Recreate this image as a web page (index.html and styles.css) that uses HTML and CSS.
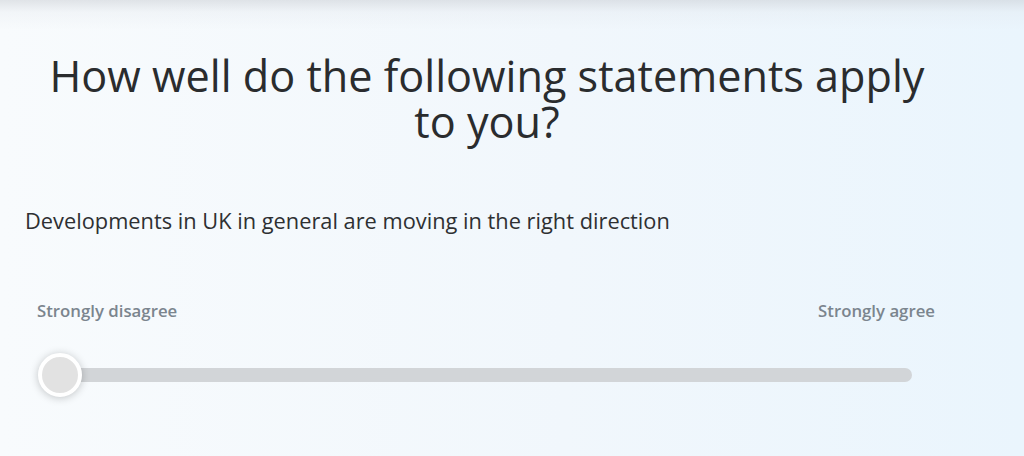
FILE: index.html
```html
<!DOCTYPE html>
<html lang="en">
<head>
<meta charset="utf-8">
<title>Survey</title>
<link rel="stylesheet" href="styles.css">
</head>
<body>
<main class="page">
  <h1 class="title">How well do the following statements apply to you?</h1>
  <p class="statement">Developments in UK in general are moving in the right direction</p>
  <div class="scale">
    <div class="labels">
      <span class="label">Strongly disagree</span>
      <span class="label">Strongly agree</span>
    </div>
    <div class="slider">
      <div class="track"></div>
      <div class="thumb"></div>
    </div>
  </div>
</main>
</body>
</html>
```

FILE: styles.css
```css
* { box-sizing: border-box; }
html, body {
  margin: 0;
  height: 100%;
}
body {
  font-family: "Open Sans", "Liberation Sans", sans-serif;
  color: #2b2d2f;
  background: linear-gradient(90deg, #f8fbfd 0%, #f1f7fc 55%, #eaf5fd 100%);
  overflow: hidden;
  position: relative;
}
body::before {
  content: "";
  position: absolute;
  left: 0; right: 0; top: 0;
  height: 30px;
  background: linear-gradient(180deg, rgba(200,204,210,0.5) 0%, rgba(220,224,230,0.22) 40%, rgba(240,244,248,0) 100%);
  pointer-events: none;
}
.page {
  width: 960px;
  padding: 0 0 0 25px;
}
.title {
  margin: 0;
  padding-top: 53px;
  font-size: 43.2px;
  font-weight: 400;
  line-height: 46px;
  text-align: center;
  color: #2a2c2e;
  padding-left: 0;
  padding-right: 11px;
}
.statement {
  margin: 61px 0 0;
  font-size: 21.8px;
  line-height: 30px;
  color: #2e3032;
}
.scale {
  margin-top: 64px;
  margin-left: 12px;
  width: 898px;
}
.labels {
  display: flex;
  justify-content: space-between;
}
.label {
  font-size: 16.8px;
  font-weight: 600;
  color: #7b858e;
  line-height: 22px;
}
.slider {
  position: relative;
  margin-top: 31px;
  height: 44px;
  display: flex;
  align-items: center;
}
.track {
  margin-left: 23px;
  margin-right: 23px;
  flex: 1;
  height: 14px;
  border-radius: 7px;
  background: #d2d5d8;
}
.thumb {
  position: absolute;
  left: 1px;
  top: 0;
  width: 44px;
  height: 44px;
  border-radius: 50%;
  background: #e2e2e2;
  border: 4px solid #ffffff;
  box-shadow: 0 1px 8px rgba(0,0,0,0.22);
}
```
